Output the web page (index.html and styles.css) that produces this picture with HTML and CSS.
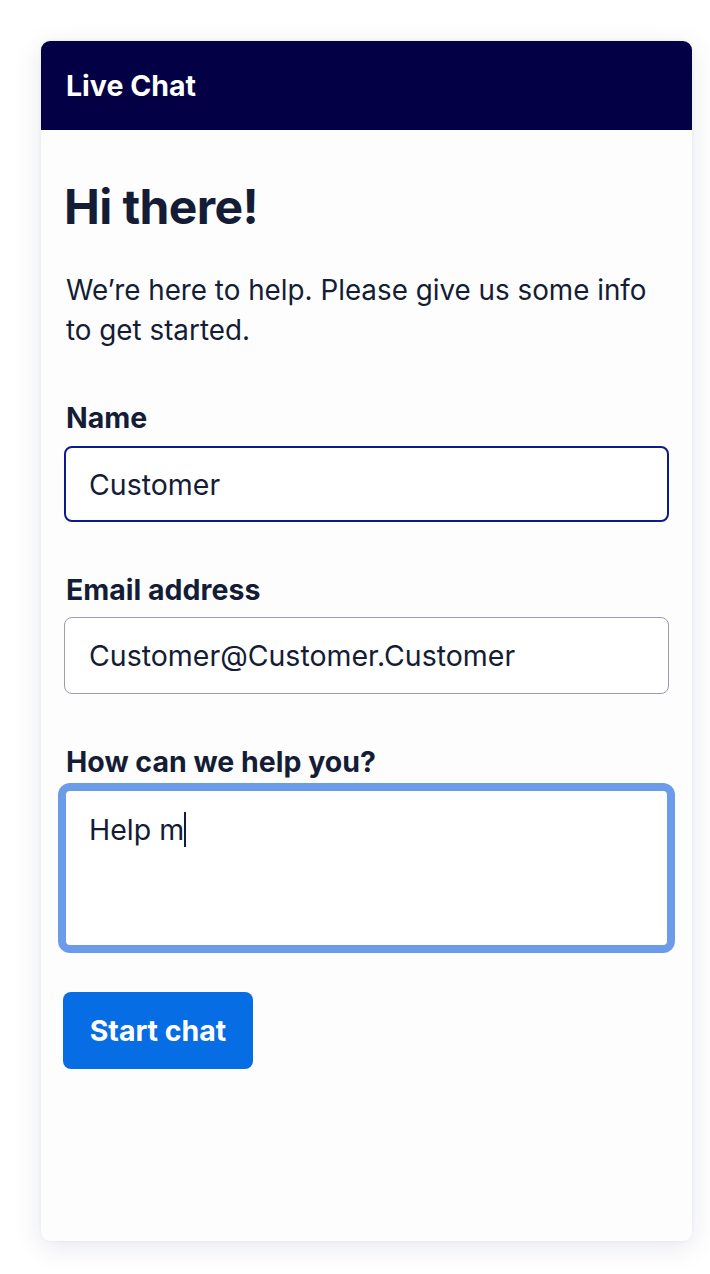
FILE: index.html
```html
<!DOCTYPE html>
<html lang="en">
<head>
<meta charset="utf-8">
<title>Live Chat</title>
<link rel="stylesheet" href="styles.css">
</head>
<body>
<div class="card">
  <div class="card-header">Live Chat</div>
  <form class="card-body">
    <h1 class="title">Hi there!</h1>
    <p class="intro">We’re here to help. Please give us some info to get started.</p>
    <label class="label">Name</label>
    <div class="field field-active">Customer</div>
    <label class="label">Email address</label>
    <div class="field">Customer@Customer.Customer</div>
    <label class="label">How can we help you?</label>
    <div class="field area">Help m<span class="caret"></span></div>
    <button type="button" class="btn">Start chat</button>
  </form>
</div>
</body>
</html>
```
FILE: styles.css
```css
html, body {
  margin: 0;
  padding: 0;
  background: #ffffff;
}
body {
  padding: 41px 18px 33px 41px;
  font-family: Inter, "Noto Sans", sans-serif;
  color: #141d35;
}
.card {
  width: 651px;
  height: 1200px;
  border-radius: 9px;
  background: #fdfdfd;
  box-shadow: 0 6px 28px rgba(20, 30, 80, 0.10), 0 0 4px rgba(20, 30, 80, 0.05);
  overflow: hidden;
  display: flex;
  flex-direction: column;
}
.card-header {
  height: 89px;
  background: #030046;
  color: #ffffff;
  font-weight: 700;
  font-size: 28.5px;
  display: flex;
  align-items: center;
  padding-left: 25px;
  box-sizing: border-box;
}
.card-body {
  display: flex;
  flex-direction: column;
  align-items: flex-start;
  padding: 0 23px;
}
.title {
  margin: 47px 0 0 0;
  font-size: 48px;
  line-height: 60px;
  font-weight: 700;
  letter-spacing: -0.6px;
}
.intro {
  margin: 33px 0 0 0;
  font-size: 27.8px;
  line-height: 40px;
  padding-left: 2px;
}
.label {
  margin-top: 48px;
  font-size: 28.5px;
  font-weight: 700;
  line-height: 40px;
  padding-left: 2px;
}
.field {
  box-sizing: border-box;
  width: 605px;
  height: 77px;
  margin-top: 7px;
  border: 1px solid #9a9eb4;
  border-radius: 8px;
  padding: 0 0 0 24px;
  display: flex;
  align-items: center;
  font-size: 28.5px;
  background: #ffffff;
}
.field-active {
  height: 76px;
  margin-top: 8px;
  border: 2px solid #0c1a8c;
  padding-left: 23px;
}
.area {
  height: 158px;
  margin-top: 7px;
  border: 2px solid #6b9ce9;
  box-shadow: 0 0 0 6px #6b9ce9;
  border-radius: 6px;
  align-items: flex-start;
  padding-top: 19px;
  padding-left: 23px;
  line-height: 40px;
}
.caret {
  display: inline-block;
  width: 2px;
  height: 35px;
  background: #141d35;
  margin-top: 2px;
}
.btn {
  margin-top: 45px;
  width: 190px;
  height: 77px;
  border: none;
  border-radius: 8px;
  background: #066de4;
  color: #ffffff;
  font-family: Inter, "Noto Sans", sans-serif;
  font-weight: 700;
  font-size: 28.5px;
  padding: 0;
  margin-left: -1px;
}
```
